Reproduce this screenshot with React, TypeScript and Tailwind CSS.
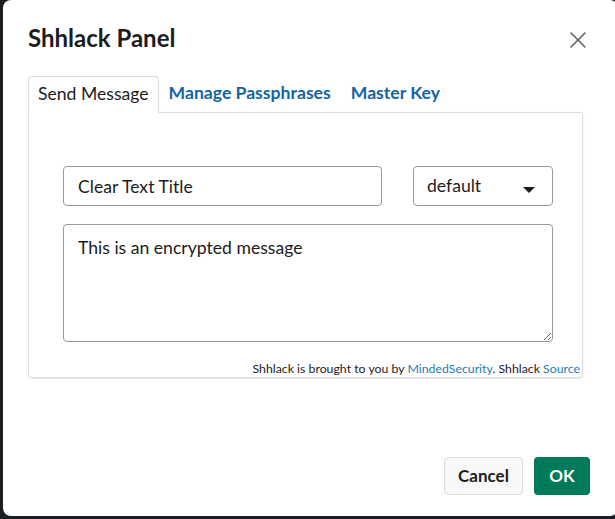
import { X } from 'lucide-react';

const App = () => {
  return (
    <div className="w-[615px] h-[519px] overflow-hidden bg-[#1a1d21] pl-[3px] pb-[3px] font-['Lato','Liberation_Sans',sans-serif] text-[#1d1c1d]">
      <div className="w-[615px] h-[516px] bg-white rounded-lg flex flex-col">
        <div className="flex items-start justify-between pl-[25px] pr-[26px] pt-[24px]">
          <h1 className="text-[24px] leading-7 font-bold">Shhlack Panel</h1>
          <button className="mt-[2px] -mb-[2px] text-[#616061]">
            <X size={28} strokeWidth={1.3} />
          </button>
        </div>

        <div className="pl-[25px] pr-[35px] mt-[24px]">
          <div className="flex text-[17.6px] leading-[34px]">
            <div className="px-[9px] border border-b-0 border-[#dddddd] rounded-t-[4px] bg-white relative z-10 -mb-px h-[37px]">
              Send Message
            </div>
            <div className="px-[10px] font-bold text-[#1264a3]">Manage Passphrases</div>
            <div className="px-[10px] font-bold text-[#1264a3]">Master Key</div>
          </div>
          <div className="h-[266px] border border-[#dddddd] rounded-b-[4px] shadow-[0_1px_2px_rgba(0,0,0,0.1)] flex flex-col">
            <div className="pl-[34px] pr-[26px] pt-[53px] flex flex-col gap-[18px]">
              <div className="flex gap-[31px]">
                <input
                  readOnly
                  defaultValue="Clear Text Title"
                  className="w-[319px] h-10 border border-[#9a9a9a] rounded-[4px] px-[14px] text-[17.6px] outline-none"
                />
                <div className="w-[140px] h-10 border border-[#9a9a9a] rounded-[4px] pl-[13px] pr-[17px] flex items-center justify-between text-[17.6px]">
                  <span>default</span>
                  <svg width="12" height="6" viewBox="0 0 12 6" className="mt-[8px]">
                    <path d="M0 0H12L6 6Z" fill="#1d1c1d" />
                  </svg>
                </div>
              </div>
              <textarea
                readOnly
                defaultValue="This is an encrypted message"
                className="w-[490px] h-[118px] border border-[#9a9a9a] rounded-[4px] px-[14px] py-[11px] text-[17.6px] leading-6 outline-none"
              />
            </div>
            <div className="mt-auto pr-[2px] text-right text-[12.3px] leading-4">
              Shhlack is brought to you by <span className="text-[#1d7cb7]">MindedSecurity</span>. Shhlack{' '}
              <span className="text-[#1d7cb7]">Source</span>
            </div>
          </div>
        </div>

        <div className="mt-auto flex justify-end gap-[11px] pr-[28px] pb-[21px]">
          <button className="w-[79px] h-[38px] rounded-[4px] border border-[#dddddd] bg-[#f8f8f8] text-[17px] font-bold">
            Cancel
          </button>
          <button className="w-[56px] h-[38px] rounded-[4px] bg-[#007a5a] text-white text-[17px] font-bold">
            OK
          </button>
        </div>
      </div>
    </div>
  );
};

export default App;
